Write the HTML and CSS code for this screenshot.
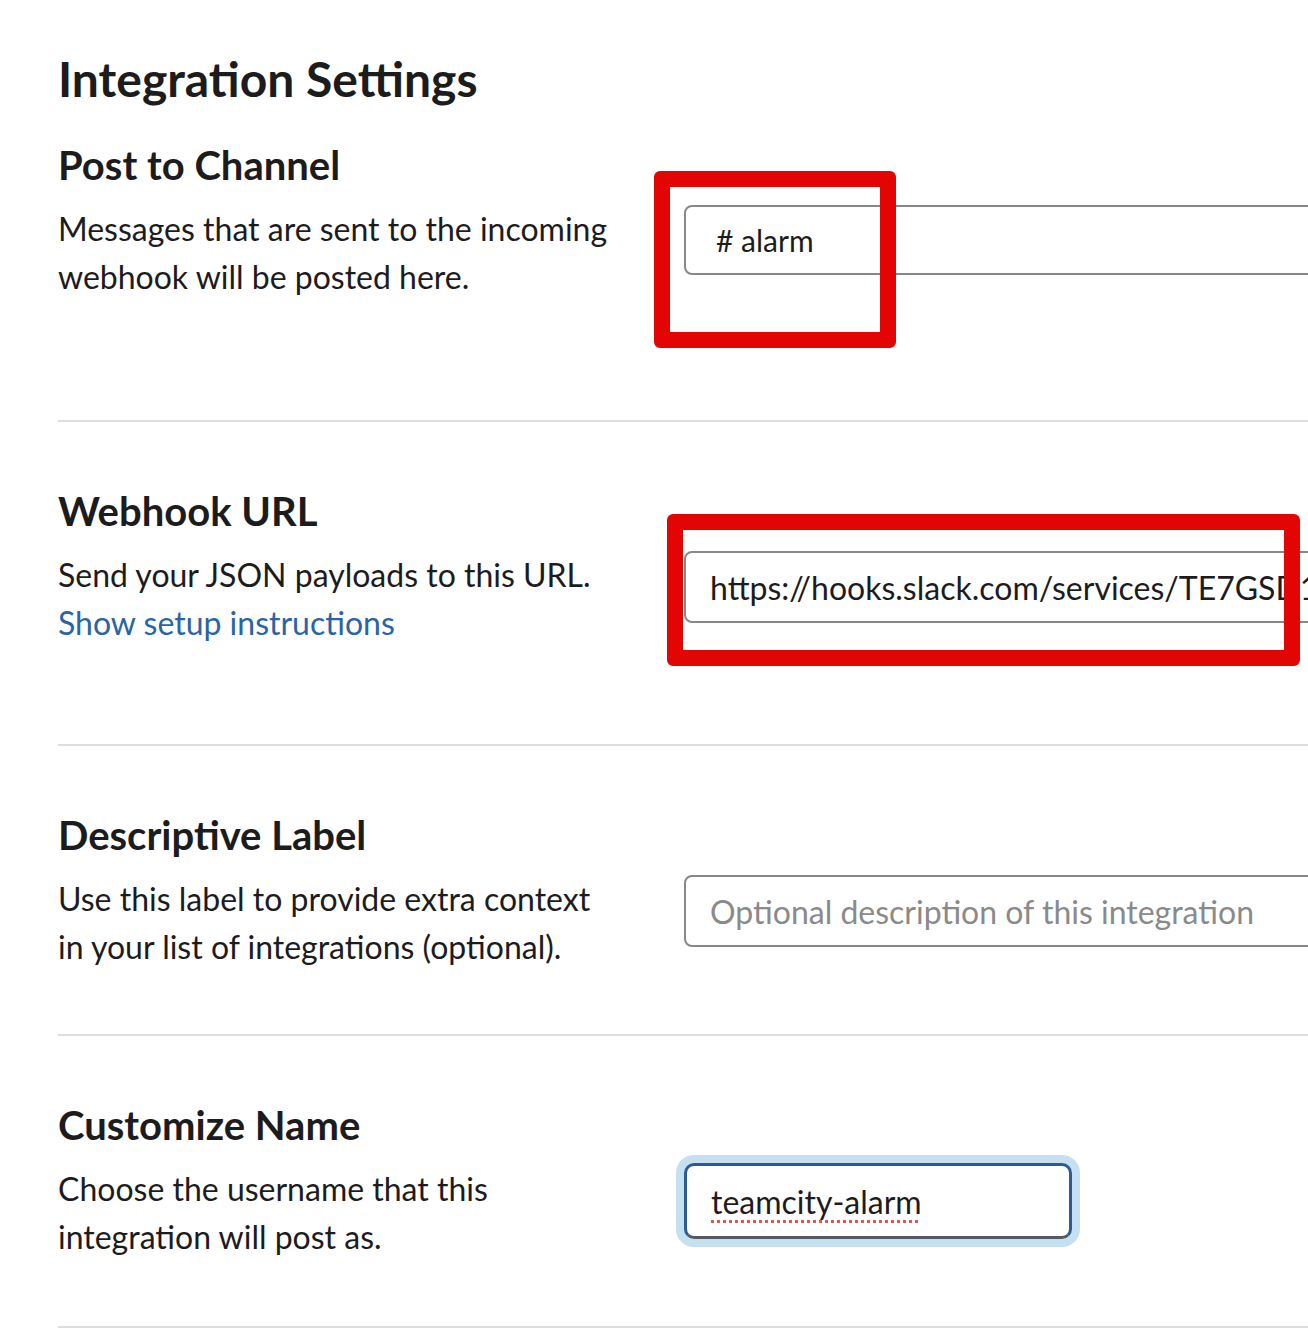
FILE: index.html
```html
<!DOCTYPE html>
<html lang="en">
<head>
<meta charset="utf-8">
<title>Integration Settings</title>
<link rel="stylesheet" href="styles.css">
</head>
<body>
<div class="page">
  <h1 class="page-title">Integration Settings</h1>

  <section class="setting setting--first">
    <div class="setting-info">
      <h2 class="setting-title">Post to Channel</h2>
      <p class="setting-desc">Messages that are sent to the incoming webhook will be posted here.</p>
    </div>
    <div class="setting-control">
      <div class="field field--channel"><span class="field-value">#&nbsp;alarm</span></div>
      <div class="highlight highlight--channel"></div>
    </div>
  </section>

  <section class="setting setting--url">
    <div class="setting-info">
      <h2 class="setting-title">Webhook URL</h2>
      <p class="setting-desc">Send your JSON payloads to this URL.<br><a class="setting-link" href="#">Show setup instructions</a></p>
    </div>
    <div class="setting-control">
      <div class="field"><span class="field-value">https://hooks.slack.com/services/TE7GSD1K2/BF3QH8XRN/q7vXcL2mPz</span></div>
      <div class="highlight highlight--url"></div>
    </div>
  </section>

  <section class="setting">
    <div class="setting-info">
      <h2 class="setting-title">Descriptive Label</h2>
      <p class="setting-desc">Use this label to provide extra context in your list of integrations (optional).</p>
    </div>
    <div class="setting-control">
      <div class="field"><span class="field-placeholder">Optional description of this integration</span></div>
    </div>
  </section>

  <section class="setting setting--last">
    <div class="setting-info">
      <h2 class="setting-title">Customize Name</h2>
      <p class="setting-desc">Choose the username that this integration will post as.</p>
    </div>
    <div class="setting-control">
      <div class="field field--focused"><span class="field-value field-value--misspelled">teamcity-alarm</span></div>
    </div>
  </section>
</div>
</body>
</html>
```

FILE: styles.css
```css
html, body {
  margin: 0;
  padding: 0;
}

body {
  width: 1308px;
  height: 1344px;
  overflow: hidden;
  background: #ffffff;
  font-family: Lato, "Open Sans", "Liberation Sans", sans-serif;
  color: #1d1c1d;
  font-variant-ligatures: common-ligatures;
}

.page {
  width: 1400px;
  margin-left: 58px;
  padding-top: 51px;
}

.page-title {
  margin: 0 0 34px;
  font-size: 48px;
  line-height: 56px;
  font-weight: 700;
}

.setting {
  display: grid;
  grid-template-columns: 626px 1fr;
  padding: 65px 0 63px;
  border-top: 2px solid #dddddd;
}

.setting--first {
  padding-top: 0;
  padding-bottom: 119px;
  border-top: none;
}

.setting--url {
  padding-bottom: 97px;
}

.setting--last {
  padding-bottom: 65px;
  border-bottom: 2px solid #dddddd;
}

.setting-title {
  margin: 0 0 16px;
  font-size: 40px;
  line-height: 48px;
  font-weight: 700;
}

.setting-desc {
  margin: 0;
  font-size: 32px;
  line-height: 48px;
  width: 560px;
}

.setting-link {
  color: #2a64a6;
  text-decoration: none;
}

.setting-control {
  position: relative;
  padding-top: 64px;
}

.field {
  box-sizing: border-box;
  height: 72px;
  display: flex;
  align-items: center;
  padding: 0 24px;
  border: 2px solid #888888;
  border-radius: 8px;
  background: #ffffff;
  font-size: 32px;
  white-space: nowrap;
  overflow: hidden;
}

.field--channel {
  height: 70px;
  padding-left: 30px;
  font-size: 30px;
}

.field--focused {
  width: 388px;
  height: 76px;
  margin-top: -2px;
  border: 3px solid #2c5d92;
  border-bottom-color: #555a60;
  border-radius: 10px;
  box-shadow: 0 0 0 8px #c7e0f1;
}

.field-value {
  color: #1d1c1d;
}

.field-value--misspelled {
  text-decoration: underline dotted #e8544a;
  text-decoration-thickness: 3px;
  text-underline-offset: 6px;
}

.field-placeholder {
  color: #8a8a8a;
}

.highlight {
  position: absolute;
  box-sizing: border-box;
  border: 16px solid #e30404;
  border-radius: 6px;
}

.highlight--channel {
  left: -30px;
  top: 30px;
  width: 242px;
  height: 177px;
}

.highlight--url {
  left: -17px;
  top: 27px;
  width: 633px;
  height: 152px;
}
```
